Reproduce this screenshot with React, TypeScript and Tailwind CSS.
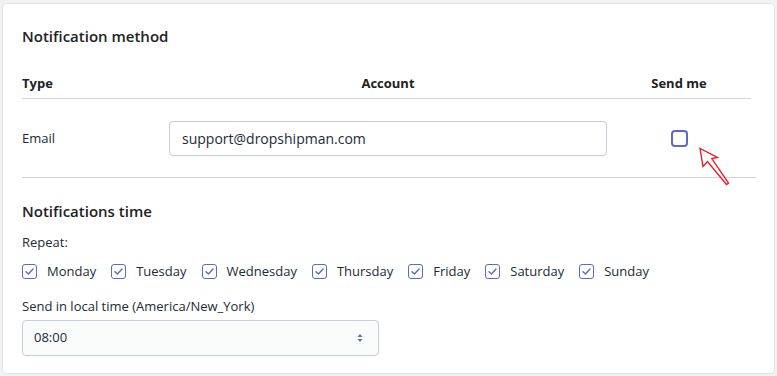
import React from "react";

const days = ["Monday", "Tuesday", "Wednesday", "Thursday", "Friday", "Saturday", "Sunday"];

function DayCheck({ label }: { label: string }) {
  return (
    <label className="flex items-center gap-[10px]">
      <span className="flex h-[15px] w-[15px] items-center justify-center rounded-[3px] border border-[#5c6ac4] bg-white">
        <svg width="9" height="7" viewBox="0 0 10 8" fill="none">
          <path d="M1 4.2 L3.8 6.8 L9 1.2" stroke="#5c6ac4" strokeWidth="1.6" strokeLinecap="round" strokeLinejoin="round" />
        </svg>
      </span>
      <span className="text-[13px] text-[#212b36]">{label}</span>
    </label>
  );
}

export default function App() {
  return (
    <div
      className="h-[376px] w-[777px] bg-[#f1f2f4] pl-[2px] pr-[2px] pt-[3px]"
      style={{ fontFamily: '"Open Sans", "Noto Sans", sans-serif' }}
    >
      <div className="relative h-[371px] w-[773px] rounded-[4px] border border-[#e1e3e5] bg-white px-[19px] pt-[22px]">
        <h2 className="text-[15px] font-semibold leading-[20px] text-[#202223]">Notification method</h2>

        <div className="mt-[28px] grid w-[729px] grid-cols-[147px_438px_144px] border-b border-[#d2d5d8] pb-[6px] text-[13px] font-bold leading-[18px] text-[#202223]">
          <div>Type</div>
          <div className="text-center">Account</div>
          <div className="text-center">Send me</div>
        </div>

        <div className="grid h-[79px] w-[734px] grid-cols-[147px_438px_149px] items-center border-b border-[#d2d5d8]">
          <div className="pt-[1px] text-[13px] text-[#212b36]">Email</div>
          <div className="flex h-[35px] items-center rounded-[4px] border border-[#c4cdd5] bg-white px-[12px] text-[14px] text-[#212b36]">
            support@dropshipman.com
          </div>
          <div className="flex justify-center pr-[5px]">
            <span className="block h-[17px] w-[17px] rounded-[4px] border-2 border-[#5c6ac4] bg-white" />
          </div>
        </div>

        <h2 className="mt-[23px] text-[15px] font-semibold leading-[20px] text-[#202223]">Notifications time</h2>
        <div className="mt-[12px] text-[13px] leading-[18px] text-[#212b36]">Repeat:</div>
        <div className="mt-[11px] flex items-center gap-[15px]">
          {days.map((d) => (
            <DayCheck key={d} label={d} />
          ))}
        </div>
        <div className="mt-[15px] text-[13px] leading-[18px] text-[#212b36]">Send in local time (America/New_York)</div>
        <div className="mt-[5px] flex h-[36px] w-[357px] items-center justify-between rounded-[4px] border border-[#c4cdd5] bg-[#fafbfb] pl-[11px] pr-[14px] text-[13px] text-[#212b36]">
          <span>08:00</span>
          <svg width="8" height="12" viewBox="0 0 8 12">
            <path d="M4 2 L6.5 5 L1.5 5 Z" fill="#637381" />
            <path d="M4 10 L6.5 7 L1.5 7 Z" fill="#637381" />
          </svg>
        </div>

        <svg className="absolute left-[692px] top-[141px]" width="38" height="44" viewBox="0 0 38 44" fill="none">
          <path
            d="M5 3.5 L8 21.5 L12.5 16.5 L31.5 39.5 L33.5 38 L16.8 13.6 L22.5 12.5 Z"
            fill="white"
            stroke="#ea1c24"
            strokeWidth="1.4"
            strokeLinejoin="miter"
          />
        </svg>
      </div>
    </div>
  );
}
